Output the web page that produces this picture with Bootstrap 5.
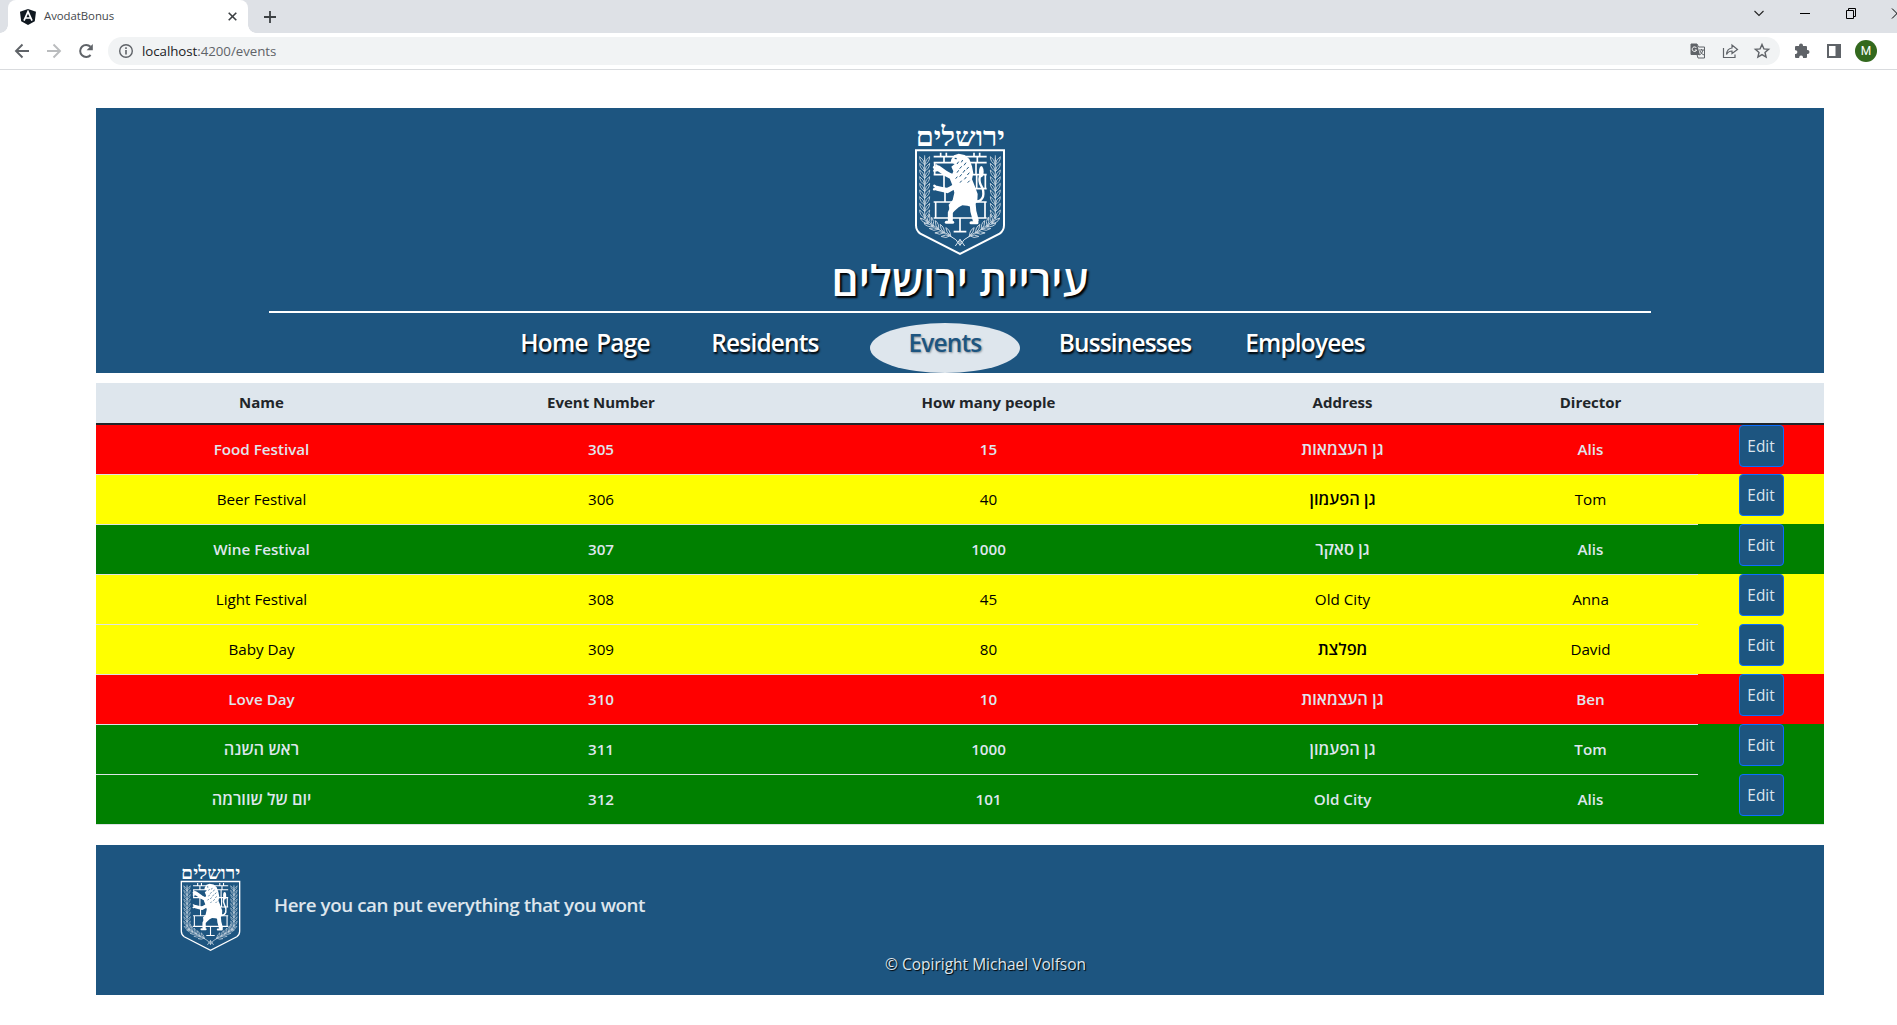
<!DOCTYPE html>
<html lang="en">
<head>
<meta charset="utf-8">
<meta name="viewport" content="width=device-width, initial-scale=1">
<title>AvodatBonus</title>
<link href="https://cdn.jsdelivr.net/npm/bootstrap@5.3.0/dist/css/bootstrap.min.css" rel="stylesheet">
<style>
:root{--city:#1d5580;--pale:#dee6ed}
body{font-family:"Open Sans","Noto Sans",sans-serif;background:#fff;overflow:hidden;height:1025px}
.chrome{font-size:14px;color:#5f6368}
.tabstrip{height:33px;background:#dee1e6;padding-left:8px;overflow:hidden}
.tab{width:240px;height:33px;background:#fff;border-radius:8px 8px 0 0;padding:0 7px 0 12px;position:relative}
.tab::before,.tab::after{content:"";position:absolute;bottom:0;width:8px;height:8px}
.tab::before{left:-8px;background:radial-gradient(circle at 0 0,transparent 7.5px,#fff 8px)}
.tab::after{right:-8px;background:radial-gradient(circle at 100% 0,transparent 7.5px,#fff 8px)}
.tab-title{font-size:11.4px;letter-spacing:-.05px;color:#45484c;margin-left:8px;padding-bottom:1px}
.new-tab{margin-left:16px}
.win{margin-right:-8px}
.win svg{margin-left:30px}
.toolbar{height:37px;border-bottom:1px solid #d9dbde;padding:4px 20px 4px 12px}
.nav-btn{margin-right:12px}
.omni{height:28px;background:#f1f3f4;border-radius:14px;padding:0 8px}
.omni-tools{gap:12px}
.url{margin-left:6px;font-size:13.3px;letter-spacing:-.05px;line-height:28px}
.url b{font-weight:400;color:#202124}
.ext{margin-left:-4px}
.panel{margin:0 11px 0 12px}
.avatar{width:22px;height:22px;background:#33691e;font:400 12px/22px Roboto,sans-serif}
.page{width:1728px;margin:38px 0 0 96px}
.masthead{background:var(--city);height:265px;padding-top:10px}
.brand-title{font-size:42.300px;font-weight:600;line-height:43px;margin:0 0 10px;text-shadow:2px 2px 2px #000}
.rule{width:80%;height:2px;background:#fff}
.main-nav{gap:30px;margin:10px 30px 0 0}
.main-nav a{width:150px;height:50px;font-size:24.4px;line-height:39px;font-weight:600;letter-spacing:-.8px;word-spacing:3px;color:#fff;text-align:center;text-decoration:none;text-shadow:1px 2px 2px #000;white-space:nowrap}
.main-nav a.active{background:var(--pale);color:var(--city);border-radius:50%;text-shadow:1px 1px 2px #8a929a}
.events{table-layout:fixed;width:1728px;margin:10px 0 0;border-collapse:separate;border-spacing:0;text-align:center;font-size:15.2px}
.events>thead th{height:42px;padding:0 0 1px;background:var(--pale);border-bottom:2px solid #212529;font-size:15px;font-weight:700;letter-spacing:-.02px;color:#212529;vertical-align:middle}
.events>tbody td{height:50px;padding:0 0 2px;vertical-align:middle;box-shadow:none;border:0;border-top:1px solid #dee2e6;background:var(--tone);color:var(--ink);font-weight:var(--weight);line-height:24px}
.events>tbody td.heb{font-size:16.4px;font-weight:var(--heb)}
.events>tbody tr:first-child td{height:49px;border-top:0}
.events>tbody td:last-child{border-top:0;vertical-align:top;padding:0}
.events>tbody tr:last-child td{border-bottom:1px solid #dee2e6;height:51px}
.few{--tone:#f00;--ink:#dee6ed;--weight:600;--heb:600}
.mid{--tone:#ff0;--ink:#000;--weight:500;--heb:600}
.full{--tone:#008000;--ink:#dee6ed;--weight:600;--heb:600}
.btn-edit{display:block;width:45px;height:42px;margin:0 auto;padding:0;font-size:15.4px;line-height:41px;background:var(--city);border:1px solid #0d6efd;border-radius:4px;color:#dee6ed}
.foot{background:var(--city);height:150px;margin-top:20px;padding:15px 0 0 84px;color:var(--pale)}
.foot-note{font-size:18.8px;font-weight:600;line-height:28px;margin:0 0 0 33px;padding-bottom:4px;letter-spacing:-.43px}
.copy{font-size:15.5px;line-height:24px;margin:-1px 0 0;padding-left:705px;text-shadow:1px 1px 1px #000}
</style>
<script src="https://cdn.jsdelivr.net/npm/bootstrap@5.3.0/dist/js/bootstrap.bundle.min.js"></script>
</head>
<body>
<svg width="0" height="0" class="position-absolute" aria-hidden="true">
<defs>
<g id="leafpair" fill="none" stroke="#c9d6e1" stroke-width="2.600" stroke-linecap="round">
<path d="M0 0V22M0 20Q-15 12 -15 -4Q-2 4 0 20Q2 4 15 -4Q15 12 0 20"/>
</g>
<g id="branch">
<use href="#leafpair"/><use href="#leafpair" y="20"/><use href="#leafpair" y="40"/><use href="#leafpair" y="60"/><use href="#leafpair" y="80"/><use href="#leafpair" y="100"/><use href="#leafpair" y="120"/><use href="#leafpair" y="140"/><use href="#leafpair" y="160"/>
<path d="M0 -8V10" stroke="#c9d6e1" stroke-width="2.600"/>
</g>
<g id="spray"><use href="#leafpair" transform="translate(34 298) rotate(-22)"/><use href="#leafpair" transform="translate(44 310) rotate(-40)"/><use href="#leafpair" transform="translate(58 322) rotate(-52)"/><use href="#leafpair" transform="translate(74 334) rotate(-58)"/><use href="#leafpair" transform="translate(92 344) rotate(-62)"/><path d="M108 354Q128 362 138 382" fill="none" stroke="#dfe8ef" stroke-width="3"/></g>
<symbol id="emblem" viewBox="0 0 276 420">
<text x="139" y="85" text-anchor="middle" textLength="268" lengthAdjust="spacingAndGlyphs" font-family="Liberation Serif,serif" font-weight="700" font-size="80" fill="#fff">ירושלים</text>
<path d="M6 97H270V322Q270 338 257 347L138 408L19 347Q6 338 6 322Z" fill="none" stroke="#fff" stroke-width="6"/>
<use href="#branch" x="32" y="120"/><use href="#branch" x="244" y="120"/>
<use href="#spray"/><use href="#spray" transform="matrix(-1 0 0 1 276 0)"/>
<g fill="none" stroke="#fff" stroke-width="5">
<path d="M59 116H218M59 134H218M59 170H218M59 212H218M59 252H218M59 300H218M80 104V116M97 104V116M180 104V116M197 104V116M90 116V134M190 116V134M62 134V170M90 170V212M186 134V170M188 170V212M214 170V212M93 212V252M65 252V300M213 252V300M138 300V341M119 341H157"/>
</g>
<path d="M112 124L120 112L134 107L152 111L166 123L174 145L178 166L174 184L182 203L191 228L190 250L176 268L160 263L145 262L134 268L118 282L106 272L104 260L116 246L121 224L116 204L108 184L118 160L112 146L122 138L110 133Z" fill="#fff"/>
<g fill="none" stroke="#fff" stroke-linecap="round" stroke-linejoin="round">
<path d="M124 182L96 167L72 150" stroke-width="16"/><path d="M128 202L100 218L70 211" stroke-width="15"/>
<path d="M70 152L67 142M68 152L60 148M70 156L61 158M70 209L61 203M70 212L60 214" stroke-width="7"/>
<path d="M118 264L109 284L109 306" stroke-width="15"/><path d="M97 313H116" stroke-width="9"/>
<path d="M176 258L178 280L185 306" stroke-width="18"/><path d="M171 314H189" stroke-width="9"/>
<path d="M184 250Q201 252 207 236Q211 218 201 202Q194 190 198 174" stroke-width="7"/>
</g>
<ellipse cx="202" cy="161" rx="7" ry="17" fill="#fff"/>
<path d="M134 131l-5 7M146 126l-4 7M156 134l-6 8M164 147l-6 7M143 145l-6 7M153 156l-6 8M134 157l-5 7M166 164l-6 7M143 169l-6 7M130 176l-5 6M157 177l-6 7M143 188l-5 6M167 188l-6 6" stroke="#1d5580" stroke-width="3"/>
<path d="M122 121l6 1" stroke="#1d5580" stroke-width="4"/>
<path d="M124 384L138 364L152 384M138 364V382" fill="none" stroke="#dfe8ef" stroke-width="3"/>
</symbol>
</defs>
</svg>

<div class="chrome">
<div class="tabstrip d-flex align-items-center">
<div class="tab d-flex align-items-center">
<svg width="16" height="16" viewBox="0 0 16 16"><path d="M8 0L16 2.700L14.800 12.300L8 16L1.200 12.300L0 2.700Z" fill="#101820"/><path d="M4 11.700L8 2.700L12 11.700M5.500 9H10.500" fill="none" stroke="#fff" stroke-width="1.700"/></svg>
<span class="tab-title">AvodatBonus</span>
<svg class="ms-auto me-1" width="9" height="9" viewBox="0 0 9 9"><path d="M.7 .7L8.300 8.300M8.300 .7L.7 8.300" stroke="#3c4043" stroke-width="1.600"/></svg>
</div>
<svg class="new-tab" width="12" height="12" viewBox="0 0 12 12"><path d="M6 0V12M0 6H12" stroke="#3c4043" stroke-width="1.800"/></svg>
<div class="win ms-auto d-flex align-items-center pb-2">
<svg width="16" height="12" viewBox="0 0 16 12"><path d="M3.500 4L8 8.500L12.500 4" fill="none" stroke="#222" stroke-width="1.100"/></svg>
<svg width="16" height="12" viewBox="0 0 16 12"><path d="M3 6.500H13" stroke="#000"/></svg>
<svg width="16" height="12" viewBox="0 0 16 12"><path d="M3.500 3.500H10.500V11.500H3.500ZM5.500 3.500V1.500H12.500V9.500H10.500" fill="none" stroke="#000"/></svg>
<svg width="16" height="12" viewBox="0 0 16 12"><path d="M3 1.500L13 11.500M13 1.500L3 11.500" stroke="#000"/></svg>
</div>
</div>
<div class="toolbar d-flex align-items-center">
<svg class="nav-btn" width="20" height="20" viewBox="0 0 20 20" fill="none" stroke="#5f6368" stroke-width="1.900"><path d="M17 10H4.500M10.500 3.500L4 10L10.500 16.500"/></svg>
<svg class="nav-btn" width="20" height="20" viewBox="0 0 20 20" fill="none" stroke="#babcbe" stroke-width="1.900"><path d="M3 10H15.500M9.500 3.500L16 10L9.500 16.500"/></svg>
<svg class="nav-btn" width="20" height="20" viewBox="0 0 20 20"><path d="M14.600 14A6 6 0 1 1 14.500 5.800" fill="none" stroke="#5f6368" stroke-width="2"/><path d="M16.800 3V9.200H10.600Z" fill="#5f6368"/></svg>
<div class="omni d-flex align-items-center flex-grow-1 me-3">
<svg width="20" height="20" viewBox="0 0 20 20"><circle cx="10" cy="10" r="6.300" fill="none" stroke="#5f6368" stroke-width="1.400"/><path d="M10 9V13.500M10 6.300V8" stroke="#5f6368" stroke-width="1.600"/></svg>
<span class="url"><b>localhost</b>:4200/events</span>
<div class="omni-tools ms-auto d-flex">
<svg width="20" height="20" viewBox="0 0 20 20"><path d="M3 3H9L10.500 6H16.500V17H10L9 13.500H3Z" fill="#f1f3f4" stroke="#5f6368"/><path d="M3 3H9L12 14H3Z" fill="#5f6368"/><path d="M8.500 7A2.300 2.300 0 1 0 8.700 9H6.800" fill="none" stroke="#fff"/><path d="M11 9H16M13.500 8V9M15 9Q14 13 11.500 14M12 10Q13 13 16 14" fill="none" stroke="#5f6368"/></svg>
<svg width="20" height="20" viewBox="0 0 20 20" fill="none" stroke="#5f6368" stroke-width="1.200"><path d="M3.500 7V16.500H15V13.500"/><path d="M6.500 13.500Q7 7.500 12 7V4L17.500 8.500L12 12.500V10Q8.500 10 6.500 13.500Z"/></svg>
<svg width="20" height="20" viewBox="0 0 20 20"><path d="M10 3.500L11.900 7.900L16.600 8.300L13 11.400L14.100 16.100L10 13.600L5.900 16.100L7 11.400L3.400 8.300L8.100 7.900Z" fill="none" stroke="#5f6368" stroke-width="1.400"/></svg>
</div>
</div>
<svg class="ext" width="20" height="20" viewBox="0 0 20 20"><path d="M3 6Q3 5 4 5H7V4.500A2 2 0 0 1 11 4.500V5H14Q15 5 15 6V9H15.500A2 2 0 0 1 15.500 13H15V16Q15 17 14 17H11V16A2 2 0 0 0 7.200 16V17H4Q3 17 3 16V13H4A2 2 0 0 0 4 9.200H3Z" fill="#5f6368"/></svg>
<svg class="panel" width="20" height="20" viewBox="0 0 20 20"><path d="M3 3H17V17H3ZM5 5V15H11.500V5Z" fill="#5f6368" fill-rule="evenodd"/></svg>
<div class="avatar rounded-circle text-white text-center">M</div>
</div>
</div>

<main class="page">
<header class="masthead d-flex flex-column align-items-center text-white">
<svg width="92" height="140"><use href="#emblem"/></svg>
<h1 class="brand-title" dir="rtl">עיריית ירושלים</h1>
<div class="rule"></div>
<nav class="main-nav d-flex justify-content-center">
<a href="#">Home Page</a><a href="#">Residents</a><a href="#" class="active">Events</a><a href="#">Bussinesses</a><a href="#">Employees</a>
</nav>
</header>

<table class="table events">
<colgroup><col style="width:331px"><col style="width:348px"><col style="width:427px"><col style="width:281px"><col style="width:215px"><col style="width:126px"></colgroup>
<thead><tr><th>Name</th><th>Event Number</th><th>How many people</th><th>Address</th><th>Director</th><th></th></tr></thead>
<tbody>
<tr class="few"><td>Food Festival</td><td>305</td><td>15</td><td class="heb">גן העצמאות</td><td>Alis</td><td><button class="btn btn-primary btn-edit">Edit</button></td></tr>
<tr class="mid"><td>Beer Festival</td><td>306</td><td>40</td><td class="heb">גן הפעמון</td><td>Tom</td><td><button class="btn btn-primary btn-edit">Edit</button></td></tr>
<tr class="full"><td>Wine Festival</td><td>307</td><td>1000</td><td class="heb">גן סאקר</td><td>Alis</td><td><button class="btn btn-primary btn-edit">Edit</button></td></tr>
<tr class="mid"><td>Light Festival</td><td>308</td><td>45</td><td>Old City</td><td>Anna</td><td><button class="btn btn-primary btn-edit">Edit</button></td></tr>
<tr class="mid"><td>Baby Day</td><td>309</td><td>80</td><td class="heb">מפלצת</td><td>David</td><td><button class="btn btn-primary btn-edit">Edit</button></td></tr>
<tr class="few"><td>Love Day</td><td>310</td><td>10</td><td class="heb">גן העצמאות</td><td>Ben</td><td><button class="btn btn-primary btn-edit">Edit</button></td></tr>
<tr class="full"><td class="heb">ראש השנה</td><td>311</td><td>1000</td><td class="heb">גן הפעמון</td><td>Tom</td><td><button class="btn btn-primary btn-edit">Edit</button></td></tr>
<tr class="full"><td class="heb">יום של שוורמה</td><td>312</td><td>101</td><td>Old City</td><td>Alis</td><td><button class="btn btn-primary btn-edit">Edit</button></td></tr>
</tbody>
</table>

<footer class="foot">
<div class="d-flex align-items-center">
<svg width="61" height="93"><use href="#emblem"/></svg>
<p class="foot-note">Here you can put everything that you wont</p>
</div>
<p class="copy">© Copiright Michael Volfson</p>
</footer>
</main>
</body>
</html>
